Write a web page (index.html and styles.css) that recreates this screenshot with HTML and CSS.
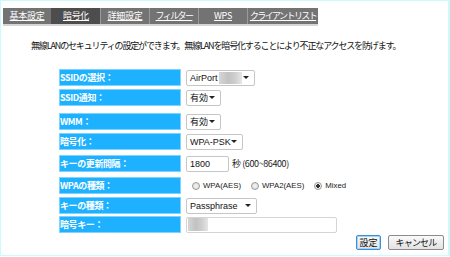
FILE: index.html
```html
<!DOCTYPE html>
<html lang="ja">
<head>
    <meta charset="UTF-8">
    <title>暗号化 - 無線LAN設定</title>
    <link rel="stylesheet" href="styles.css">
</head>
<body>
    <div class="frame">
        <div class="tabs">
            <a class="tab">基本設定</a>
            <a class="tab active">暗号化</a>
            <a class="tab">詳細設定</a>
            <a class="tab kana">フィルター</a>
            <a class="tab">WPS</a>
            <a class="tab kana wide">クライアントリスト</a>
        </div>

        <p class="intro">無線LANのセキュリティの設定ができます。無線LANを暗号化することにより不正なアクセスを防げます。</p>

        <div class="form">
            <div class="row">
                <div class="label">SSIDの選択：</div>
                <div class="select w-ssid"><span>AirPort<i class="blur"></i></span><b class="arrow"></b></div>
            </div>
            <div class="row">
                <div class="label">SSID通知：</div>
                <div class="select w-small"><span class="jp">有効</span><b class="arrow"></b></div>
            </div>
            <div class="row mt7">
                <div class="label">WMM：</div>
                <div class="select w-small"><span class="jp">有効</span><b class="arrow"></b></div>
            </div>
            <div class="row">
                <div class="label">暗号化：</div>
                <div class="select w-mode"><span>WPA-PSK</span><b class="arrow"></b></div>
            </div>
            <div class="row mt5">
                <div class="label">キーの更新間隔：</div>
                <div class="input w-num">1800</div>
                <span class="note">秒 (600~86400)</span>
            </div>
            <div class="row mt5">
                <div class="label">WPAの種類：</div>
                <div class="radios">
                    <span class="radio"><i class="dot"></i>WPA(AES)</span>
                    <span class="radio"><i class="dot"></i>WPA2(AES)</span>
                    <span class="radio"><i class="dot on"></i>Mixed</span>
                </div>
            </div>
            <div class="row">
                <div class="label">キーの種類：</div>
                <div class="select w-key"><span>Passphrase</span><b class="arrow"></b></div>
            </div>
            <div class="row mt2">
                <div class="label">暗号キー：</div>
                <div class="input w-pass"><i class="blur short"></i></div>
            </div>
        </div>

        <div class="buttons">
            <button class="btn focus">設定</button>
            <button class="btn cancel">キャンセル</button>
        </div>
    </div>
</body>
</html>
```

FILE: styles.css
```css
body {
    margin: 0;
    background: #ffffff;
    font-family: "Noto Sans CJK JP", "Liberation Sans", sans-serif;
    color: #222222;
}

.frame {
    width: 450px;
    height: 256px;
    box-sizing: border-box;
    border: 1px solid #c9fbff;
    border-right-width: 2px;
    padding: 7px 0 0 2px;
}

/* tab bar */
.tabs {
    display: flex;
    width: 315px;
    height: 16px;
    background: #737373;
    border-bottom: 2px solid #d6d6d6;
}

.tab {
    width: 48px;
    border-left: 1px solid #9a9a9a;
    color: #ffffff;
    font-size: 9px;
    line-height: 16px;
    text-align: center;
    text-decoration: underline;
    letter-spacing: -0.3px;
    white-space: nowrap;
}

.tab.kana {
    letter-spacing: -1.6px;
}

.tab:first-child {
    border-left: none;
}

.tab.active {
    background: #4d4d4d;
    border-left-color: #4d4d4d;
}

.tab.wide {
    flex: 1;
}

.intro {
    margin: 14px 0 0 28px;
    font-size: 9px;
    line-height: 12px;
    letter-spacing: -1.15px;
    color: #111111;
}

/* form rows */
.form {
    margin: 17px 0 0 56px;
    display: flex;
    flex-direction: column;
}

.row {
    display: flex;
    align-items: center;
    height: 17px;
    margin-top: 3px;
}

.row:first-child { margin-top: 0; }
.row.mt2 { margin-top: 2px; }
.row.mt5 { margin-top: 5px; }
.row.mt7 { margin-top: 7px; }

.label {
    width: 120px;
    height: 15px;
    margin-right: 5px;
    background: #1eb1ff;
    border: 1px solid #7fd3ff;
    color: #ffffff;
    font-size: 9px;
    font-weight: bold;
    line-height: 15px;
    letter-spacing: -0.4px;
}

.select,
.input {
    box-sizing: border-box;
    height: 16px;
    border: 1px solid #c6c6c6;
    border-radius: 2px;
    background: #ffffff;
    display: flex;
    align-items: center;
    padding-left: 3px;
    overflow: hidden;
    font-family: "Liberation Sans", "Noto Sans CJK JP", sans-serif;
    font-size: 9px;
    color: #111111;
}

.select span {
    flex: 1;
    display: flex;
    align-items: center;
    white-space: nowrap;
}

.select .jp {
    font-family: "Noto Sans CJK JP", sans-serif;
    font-size: 9px;
}

.arrow {
    width: 0;
    height: 0;
    margin-right: 5px;
    border-left: 3px solid transparent;
    border-right: 3px solid transparent;
    border-top: 3px solid #222222;
}

.blur {
    display: inline-block;
    width: 23px;
    height: 12px;
    margin-left: 1px;
    background: linear-gradient(90deg, #d6d6d6, #c2c2c2 40%, #cfcfcf 70%, #e6e6e6);
}

.blur.short {
    width: 20px;
    height: 13px;
    margin-left: -2px;
}

.w-ssid { width: 69px; }
.w-small { width: 35px; }
.w-mode { width: 57px; }
.w-key { width: 71px; }
.w-num { width: 43px; }
.w-pass { width: 151px; border-color: #d4d4d4; }

.note {
    margin-left: 3px;
    font-size: 9px;
    letter-spacing: -0.4px;
}

.radios {
    display: flex;
    gap: 10px;
    margin-left: 6px;
}

.radio {
    display: flex;
    align-items: center;
    font-family: "Liberation Sans", sans-serif;
    font-size: 7.8px;
    color: #222222;
}

.dot {
    width: 8px;
    height: 8px;
    margin-right: 3px;
    border: 1px solid #9a9a9a;
    border-radius: 50%;
    box-sizing: border-box;
    background: radial-gradient(circle, #f4f4f4, #d8d8d8);
}

.dot.on {
    background: radial-gradient(circle, #333333 0 1.6px, #f4f4f4 2px, #dcdcdc);
}

/* buttons */
.buttons {
    display: flex;
    justify-content: flex-end;
    gap: 7px;
    margin: 2px 4px 0 0;
}

.btn {
    height: 15px;
    padding: 0;
    border: 1px solid #8a8a8a;
    border-radius: 2px;
    background: linear-gradient(#fafafa, #e2e2e2);
    font-family: "Noto Sans CJK JP", sans-serif;
    font-size: 9px;
    line-height: 13px;
    color: #111111;
}

.btn.focus {
    width: 25px;
    border-color: #3c8ed6;
    box-shadow: inset 0 0 0 1px #9fd4f7;
}

.btn.cancel {
    width: 56px;
    letter-spacing: -0.8px;
}
```
